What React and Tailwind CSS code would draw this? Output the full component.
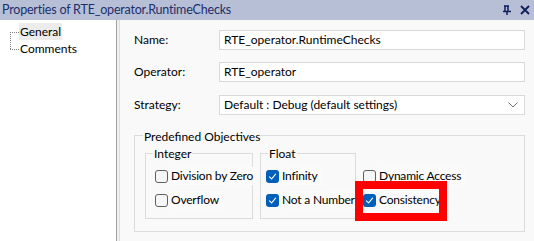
import React from "react";

const font = { fontFamily: 'Lato, "Noto Sans", sans-serif' };

function Check({ checked }) {
  if (checked) {
    return (
      <span className="w-[13px] h-[13px] rounded-[3px] bg-[#005fb8] flex items-center justify-center shrink-0">
        <svg width="9" height="9" viewBox="0 0 9 9">
          <path d="M1.5 4.8 L3.6 6.8 L7.6 2.2" fill="none" stroke="#ffffff" strokeWidth="1.1" strokeLinecap="round" strokeLinejoin="round" />
        </svg>
      </span>
    );
  }
  return <span className="w-[13px] h-[13px] rounded-[3px] border border-[#5f5f5f] bg-[#f6f6f6] shrink-0" />;
}

function CB({ checked, label }) {
  return (
    <div className="flex items-center h-[18px] gap-[3px] whitespace-nowrap">
      <Check checked={checked} />
      <span className="bg-[#fbfbfb] pr-[5px] leading-[18px] tracking-[-0.2px]">{label}</span>
    </div>
  );
}

function Field({ label, value, select }) {
  return (
    <div className="flex items-center h-[20px] whitespace-nowrap">
      <div className="w-[99px] pl-[14px] text-[#000]">{label}</div>
      <div className="flex-1 h-[20px] bg-white border border-[#d9d9d9] flex items-center pl-[4px] pr-[6px]">
        <span className="flex-1">{value}</span>
        {select && (
          <svg width="10" height="6" viewBox="0 0 10 6">
            <path d="M0.5 0.5 L5 5 L9.5 0.5" fill="none" stroke="#6b6b6b" strokeWidth="1" />
          </svg>
        )}
      </div>
    </div>
  );
}

export default function App() {
  return (
    <div className="w-[534px] h-[241px] flex flex-col bg-white text-[12px] text-black overflow-hidden" style={font}>
      <div className="h-[20px] bg-[#b7bfd6] flex items-center pl-[2px] pr-[4px] text-[12.5px] tracking-[-0.2px] text-[#1b2f6b] whitespace-nowrap">
        <span className="flex-1 leading-[20px]">Properties of RTE_operator.RuntimeChecks</span>
        <svg width="10" height="11" viewBox="0 0 10 11" className="mr-[8px]">
          <path d="M3 1 V6 M6 1 V6 M2 1 H7 M1 6.5 H9 M5 6.5 V10" stroke="#0e1d5c" strokeWidth="1.5" fill="none" />
        </svg>
        <svg width="10" height="10" viewBox="0 0 10 10">
          <path d="M1 1 L9 9 M9 1 L1 9" stroke="#0e1d5c" strokeWidth="1.8" />
        </svg>
      </div>
      <div className="flex flex-1">
        <div className="w-[117px] bg-white border-r border-[#a0a0a0] pt-[3px] pl-[10px] relative whitespace-nowrap">
          <div className="flex items-center h-[17px]">
            <span className="w-[9px] border-t border-dotted border-[#808080] mt-[1px]" />
            <span className="bg-[#ececec] px-[1px] leading-[17px]">General</span>
          </div>
          <div className="flex items-center h-[17px]">
            <span className="w-[9px] border-t border-dotted border-[#808080] mt-[1px]" />
            <span className="px-[1px] leading-[17px]">Comments</span>
          </div>
          <span className="absolute left-[10px] top-[12px] h-[17px] border-l border-dotted border-[#808080]" />
        </div>
        <div className="w-[3px] bg-[#f0f0f0] border-r border-[#dcdcdc]" />
        <div className="flex-1 bg-[#f9f9f9] flex flex-col pr-[9px]">
          <div className="mt-[10px]"><Field label="Name:" value="RTE_operator.RuntimeChecks" /></div>
          <div className="mt-[12px]"><Field label="Operator:" value="RTE_operator" /></div>
          <div className="mt-[13px]"><Field label="Strategy:" value="Default : Debug (default settings)" select /></div>
          <div className="ml-[14px] mt-[20px] h-[97px] border border-[#dcdcdc] relative whitespace-nowrap">
            <span className="absolute left-[8px] -top-[7px] bg-[#f9f9f9] px-[1px] leading-[16px]">Predefined Objectives</span>
            <div className="flex mt-[17px] ml-[10px]">
              <div className="w-[108px] h-[66px] border border-[#dcdcdc] relative pl-[9px] pt-[13px] flex flex-col gap-[6px]">
                <span className="absolute left-[7px] -top-[8px] bg-[#f9f9f9] px-[1px] leading-[16px]">Integer</span>
                <CB label="Division by Zero" />
                <CB label="Overflow" />
              </div>
              <div className="w-[96px] h-[66px] ml-[7px] border border-[#dcdcdc] relative pl-[5px] pt-[13px] flex flex-col gap-[6px]">
                <span className="absolute left-[7px] -top-[8px] bg-[#f9f9f9] px-[1px] leading-[16px]">Float</span>
                <CB checked label="Infinity" />
                <CB checked label="Not a Number" />
              </div>
              <div className="ml-[7px] pt-[14px] flex flex-col gap-[6px] relative">
                <CB label="Dynamic Access" />
                <CB checked label="Consistency" />
                <span className="absolute -left-[8px] top-[28px] w-[92px] h-[40px] border-[8px] border-[#ff0000]" />
              </div>
            </div>
          </div>
        </div>
      </div>
    </div>
  );
}
